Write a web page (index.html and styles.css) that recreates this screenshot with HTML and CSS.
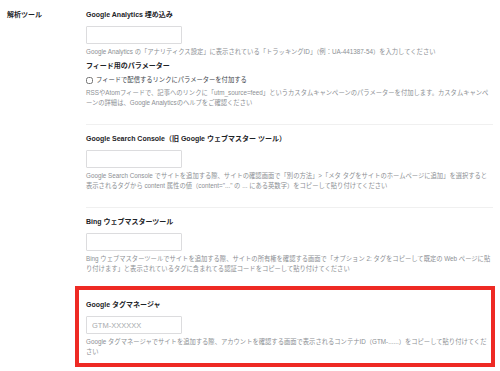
FILE: index.html
```html
<!DOCTYPE html>
<html lang="ja">
<head>
<meta charset="UTF-8">
<title>解析ツール</title>
<link rel="stylesheet" href="styles.css">
</head>
<body>
<div class="settings">
  <div class="label">解析ツール</div>
  <div class="fields">
    <div class="field">
      <h3>Google Analytics 埋め込み</h3>
      <input class="text" type="text">
      <p class="desc">Google Analytics の「アナリティクス設定」に表示されている「トラッキングID」（例：UA-441387-54）を入力してください</p>
      <h4>フィード用のパラメーター</h4>
      <label class="check"><input type="checkbox">フィードで配信するリンクにパラメーターを付加する</label>
      <p class="desc">RSSやAtomフィードで、記事へのリンクに「utm_source=feed」というカスタムキャンペーンのパラメーターを付加します。カスタムキャンペーンの詳細は、Google Analyticsのヘルプをご確認ください</p>
    </div>

    <div class="field">
      <h3>Google Search Console（旧 Google ウェブマスター ツール）</h3>
      <input class="text" type="text">
      <p class="desc">Google Search Console でサイトを追加する際、サイトの確認画面で「別の方法」&gt;「メタ タグをサイトのホームページに追加」を選択すると表示されるタグから content 属性の値（content="..." の ... にある英数字）をコピーして貼り付けてください</p>
    </div>

    <div class="field no-line">
      <h3>Bing ウェブマスターツール</h3>
      <input class="text" type="text">
      <p class="desc">Bing ウェブマスターツールでサイトを追加する際、サイトの所有権を確認する画面で「オプション 2: タグをコピーして既定の Web ページに貼り付けます」と表示されているタグに含まれてる認証コードをコピーして貼り付けてください</p>
    </div>

    <div class="field marked">
      <h3>Google タグマネージャ</h3>
      <input class="text" type="text" placeholder="GTM-XXXXXX">
      <p class="desc">Google タグマネージャでサイトを追加する際、アカウントを確認する画面で表示されるコンテナID（GTM-......）をコピーして貼り付けてください</p>
    </div>
  </div>
</div>
</body>
</html>
```

FILE: styles.css
```css
* {
	margin: 0;
	padding: 0;
	box-sizing: border-box;
}

body {
	background: #fff;
	color: #1d2327;
	font-family: "Liberation Sans", "Noto Sans CJK JP", sans-serif;
}

.settings {
	display: flex;
	padding-top: 8px;
}

.label {
	width: 86px;
	padding-left: 7px;
	font-size: 7px;
	font-weight: bold;
	line-height: 14px;
}

.fields {
	width: 407px;
}

.field {
	padding-bottom: 16px;
	margin-bottom: 7px;
	border-bottom: 1px solid #f0f0f0;
}

.field.no-line {
	padding-bottom: 12px;
	margin-bottom: 0;
	border-bottom: 0;
}

h3 {
	font-size: 7px;
	font-weight: bold;
	line-height: 14px;
}

h4 {
	font-size: 7px;
	font-weight: bold;
	line-height: 10px;
	margin-top: 4px;
}

.text {
	display: block;
	width: 96px;
	height: 18px;
	margin-top: 4px;
	border: 1px solid #dcdcde;
	border-radius: 1px;
	background: #fff;
	padding: 0 5px;
	font-size: 7.5px;
	color: #333;
	outline: none;
}

.text::placeholder {
	color: #a7aaad;
}

.desc {
	margin-top: 3px;
	font-size: 6.3px;
	line-height: 10px;
	color: #8c8f94;
}

.check {
	display: flex;
	align-items: center;
	margin-top: 4px;
	font-size: 6.3px;
	line-height: 10px;
	color: #3c434a;
}

.check input {
	width: 7px;
	height: 7px;
	margin-right: 3px;
}

/* 赤枠で強調 */
.marked {
	margin: 0 -2px 0 -11px;
	padding: 8px 3px 6px 7px;
	border: 4px solid #ee2a24;
}
```
